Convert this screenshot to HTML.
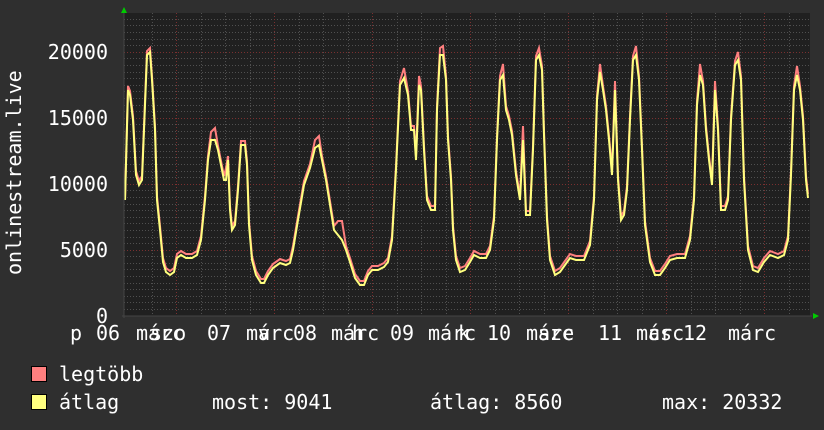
<!DOCTYPE html>
<html><head><meta charset="utf-8"><style>
html,body{margin:0;padding:0;background:#2f2f2f;width:824px;height:430px;overflow:hidden}
text{font-family:"DejaVu Sans Mono","Liberation Mono",monospace;fill:#fff}
</style></head><body>
<svg width="824" height="430" viewBox="0 0 824 430" xmlns="http://www.w3.org/2000/svg">
<defs>
<pattern id="hm" width="686" height="6.6" patternUnits="userSpaceOnUse" x="124" y="316">
<line x1="0" y1="0.5" x2="686" y2="0.5" stroke="#555" stroke-width="1" stroke-dasharray="1,2"/>
</pattern>
</defs>
<rect x="124" y="13" width="686" height="303" fill="#202020"/>
<g stroke="#505050" stroke-width="1" stroke-dasharray="1,2">
<!-- horizontal minor every 500 -->
<path d="M124 309.5H810M124 302.5H810M124 296.5H810M124 289.5H810M124 283.5H810M124 276.5H810M124 269.5H810M124 263.5H810M124 256.5H810M124 243.5H810M124 237.5H810M124 230.5H810M124 223.5H810M124 217.5H810M124 210.5H810M124 204.5H810M124 197.5H810M124 190.5H810M124 177.5H810M124 171.5H810M124 164.5H810M124 157.5H810M124 151.5H810M124 144.5H810M124 138.5H810M124 131.5H810M124 124.5H810M124 111.5H810M124 105.5H810M124 98.5H810M124 91.5H810M124 85.5H810M124 78.5H810M124 72.5H810M124 65.5H810M124 58.5H810M124 45.5H810M124 39.5H810M124 32.5H810M124 25.5H810M124 19.5H810"/>
<path d="M152.5 13V316M201.5 13V316M225.5 13V316M250.5 13V316M299.5 13V316M323.5 13V316M348.5 13V316M397.5 13V316M421.5 13V316M446.5 13V316M495.5 13V316M519.5 13V316M544.5 13V316M593.5 13V316M617.5 13V316M642.5 13V316M691.5 13V316M715.5 13V316M740.5 13V316M789.5 13V316"/>
</g>
<g stroke="#7a3030" stroke-width="1" stroke-dasharray="1,2">
<path d="M124 250.5H810M124 184.5H810M124 118.5H810M124 52.5H810"/>
<path d="M176.5 13V316M274.5 13V316M372.5 13V316M470.5 13V316M568.5 13V316M666.5 13V316M764.5 13V316"/>
</g>
<polyline transform="translate(0,-4)" fill="none" stroke="#ff7f7f" stroke-width="2" points="125,204 128,90 130,95 133,120 136,175 139,185 142,180 144,130 147,55 150,52 152,80 155,130 157,200 160,230 163,262 166,272 170,275 174,272 177,258 181,255 186,258 192,258 197,255 201,240 205,200 208,160 211,136 215,132 218,150 221,165 224,180 226,172 228,160 230,210 232,230 235,225 238,190 241,145 245,145 247,165 249,225 252,260 256,275 261,283 264,283 268,275 273,268 280,263 286,265 290,263 293,250 298,220 304,185 310,168 315,144 319,140 322,160 326,180 330,205 334,230 338,225 342,225 346,250 350,262 355,278 360,285 364,285 368,275 372,270 378,270 384,267 388,262 392,240 396,170 400,85 404,72 408,95 411,130 414,130 416,160 419,80 421,90 424,150 427,200 431,210 435,210 437,110 440,52 443,50 446,80 448,140 451,180 453,230 456,260 460,272 465,270 470,262 474,255 480,258 486,258 490,250 494,220 497,140 500,80 503,68 506,110 509,120 512,135 516,175 520,200 523,130 526,215 530,215 533,150 536,60 539,52 542,70 544,135 547,220 550,260 555,275 560,272 565,265 570,258 576,260 584,260 590,245 594,200 597,100 600,68 603,90 606,110 609,140 612,175 615,85 618,180 621,220 624,215 627,190 630,120 633,60 636,50 639,80 642,150 645,225 650,262 655,275 660,275 665,268 670,260 677,258 685,258 690,240 694,200 697,105 700,68 703,85 706,130 709,160 712,185 715,85 718,130 721,210 725,210 728,200 731,120 735,65 738,56 741,80 744,180 748,250 753,270 758,272 764,262 770,255 778,258 784,255 788,240 791,175 794,90 797,70 800,90 803,120 806,180 808,198"/>
<polyline fill="none" stroke="#ffff7f" stroke-width="2" points="125,200 128,90 130,95 133,120 136,175 139,185 142,180 144,130 147,55 150,52 152,80 155,130 157,200 160,230 163,262 166,272 170,275 174,272 177,258 181,255 186,258 192,258 197,255 201,240 205,200 208,160 211,140 215,140 218,150 221,165 224,180 226,180 228,160 230,210 232,230 235,225 238,190 241,145 245,145 247,165 249,225 252,260 256,275 261,283 264,283 268,275 273,268 280,263 286,265 290,263 293,250 298,220 304,185 310,168 315,148 319,145 322,160 326,180 330,205 334,230 338,235 342,240 346,250 350,262 355,278 360,285 364,285 368,275 372,270 378,270 384,267 388,262 392,240 396,170 400,85 404,78 408,95 411,130 414,130 416,160 419,85 421,90 424,150 427,200 431,210 435,210 437,110 440,55 443,55 446,80 448,140 451,180 453,230 456,260 460,272 465,270 470,262 474,255 480,258 486,258 490,250 494,220 497,140 500,80 503,75 506,110 509,120 512,135 516,175 520,200 523,140 526,215 530,215 533,150 536,60 539,55 542,70 544,135 547,220 550,260 555,275 560,272 565,265 570,258 576,260 584,260 590,245 594,200 597,100 600,72 603,90 606,110 609,140 612,175 615,90 618,180 621,220 624,215 627,190 630,120 633,60 636,55 639,80 642,150 645,225 650,262 655,275 660,275 665,268 670,260 677,258 685,258 690,240 694,200 697,105 700,75 703,85 706,130 709,160 712,185 715,90 718,130 721,210 725,210 728,200 731,120 735,65 738,60 741,80 744,180 748,250 753,270 758,272 764,262 770,255 778,258 784,255 788,240 791,175 794,90 797,75 800,90 803,120 806,180 808,198"/>
<path d="M124 13V318M122 316H812" stroke="#444" stroke-width="1"/>
<polygon points="121,13 127,13 124,7" fill="#0c0"/>
<polygon points="813,313 813,319 819,316" fill="#0c0"/>
<g font-size="20" text-anchor="end">
<text x="108" y="59">20000</text>
<text x="108" y="125">15000</text>
<text x="108" y="191">10000</text>
<text x="108" y="257">5000</text>
<text x="108" y="323">0</text>
</g>
<text transform="translate(21,275) rotate(-90)" font-size="20">onlinestream.live</text>
<g font-size="20">
<text x="70" y="340">p</text><text x="96" y="340">06</text><text x="136" y="340">márc</text><text x="150" y="340">szo</text>
<text x="207" y="340">07</text><text x="246" y="340">márc</text><text x="258" y="340">v</text>
<text x="293" y="340">08</text><text x="331" y="340">márc</text><text x="352" y="340">h</text>
<text x="390" y="340">09</text><text x="428" y="340">márc</text><text x="458" y="340">k</text>
<text x="487" y="340">10</text><text x="526" y="340">márc</text><text x="538" y="340">sze</text>
<text x="598" y="340">11</text><text x="636" y="340">márc</text><text x="648" y="340">cs</text>
<text x="683" y="340">12</text><text x="728" y="340">márc</text>
</g>
<rect x="31.5" y="366.5" width="15" height="15" fill="#ff7f7f" stroke="#000"/>
<rect x="31.5" y="394.5" width="15" height="15" fill="#ffff7f" stroke="#000"/>
<g font-size="20">
<text x="59" y="381">legtöbb</text>
<text x="59" y="409">átlag</text>
<text x="212" y="409">most: 9041</text>
<text x="430" y="409">átlag: 8560</text>
<text x="662" y="409">max: 20332</text>
</g>
</svg>
</body></html>
